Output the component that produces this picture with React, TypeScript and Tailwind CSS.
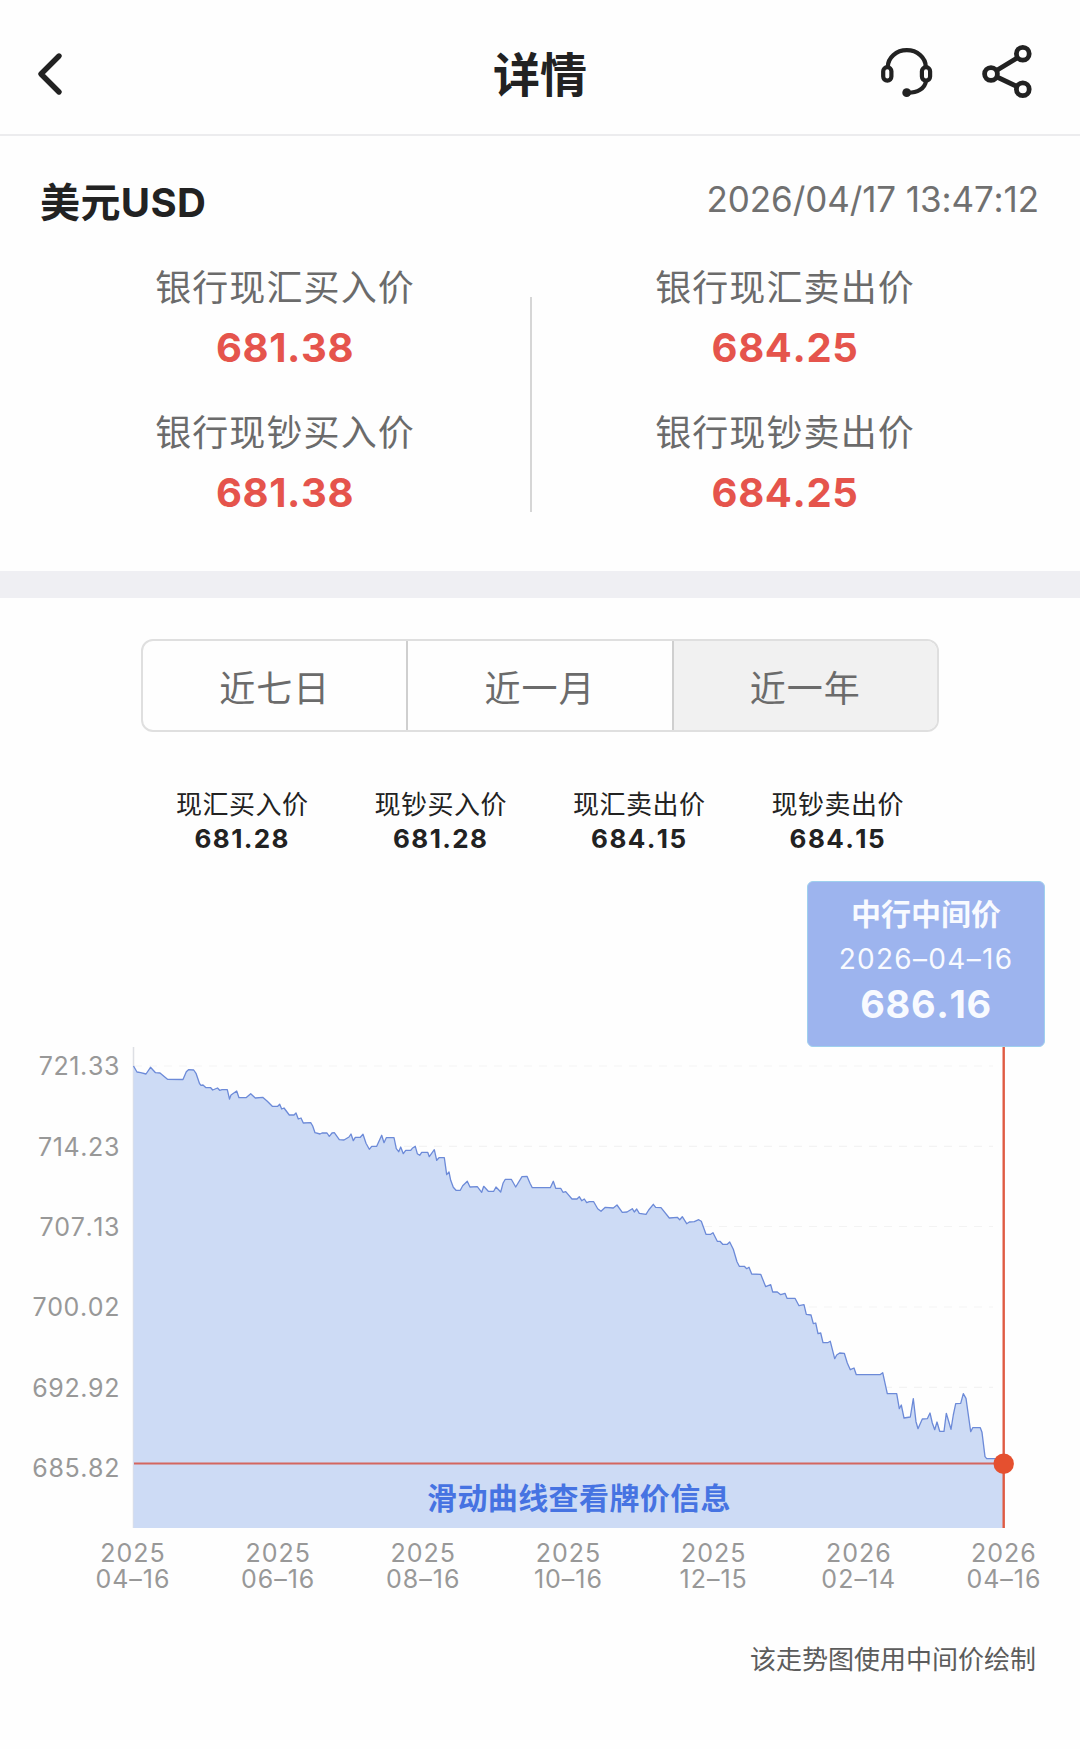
import { useState } from "react";
import clsx from "clsx";

const rates = [
  [
    ["银行现汇买入价", "681.38"],
    ["银行现钞买入价", "681.38"]
  ],
  [
    ["银行现汇卖出价", "684.25"],
    ["银行现钞卖出价", "684.25"]
  ]
] as const;

const tabs = ["近七日", "近一月", "近一年"] as const;

const stats = [
  ["现汇买入价", "681.28"],
  ["现钞买入价", "681.28"],
  ["现汇卖出价", "684.15"],
  ["现钞卖出价", "684.15"]
] as const;

const yLabels = ["721.33", "714.23", "707.13", "700.02", "692.92", "685.82"];

const xLabels = [
  "2025\n04–16",
  "2025\n06–16",
  "2025\n08–16",
  "2025\n10–16",
  "2025\n12–15",
  "2026\n02–14",
  "2026\n04–16"
];

const gridLines = [26, 106.3, 186.5, 267, 347.3];

// x,y pairs of the middle rate over one year
const points =
  "133.5,26 137,32 140.7,32.7 146,34 150.5,27.3 155.5,32.7 160,33 167.5,39.3 183,39.5 186.3,31.7 188.5,29.7 193.7,30 196,33.3 " +
  "199.5,43.5 201,45.3 203,45 206,47.7 210.7,47.7 212.7,50 217.5,48 219.7,50.3 222,49.7 227.3,49.7 229.5,59 231,55 236.7,51 " +
  "239,57.7 246,57.7 250.7,53.7 255.3,58 262.7,57.3 267.3,61.3 272.3,66.3 277.7,66.3 279.7,64.3 281.7,69 284,68 289.3,75 294,75 " +
  "296,73 298.3,79 301,78 303.3,83 310.7,82.7 312.7,86 315,92.7 320,94 322,93 327,93 329.3,96.3 332,93 334.3,92.7 339.3,99.7 " +
  "344,100 349,97 351,94 353.3,100.7 355.3,97.3 360.3,97.3 363,94.3 366,103.3 369.3,109.3 371.7,106.3 376.7,106.3 381.7,95.3 " +
  "384,102.7 386.3,97.7 394,97.7 396.3,108.7 398.7,111.7 400.7,107 403.3,113.7 405.7,110.3 410.7,110.3 412.3,108.3 415.3,106.3 " +
  "417.3,113.7 419.7,115.3 421.7,112.3 427.7,112.3 429.3,116.7 434.3,109.7 436.7,120.3 439,117.7 444.3,117.7 446.7,134.7 449,132 " +
  "450.7,140.3 453.3,147.3 456,150.3 460.3,150.3 462.7,145.7 467.3,141.3 470,147 477.3,146.7 481.7,152.3 483.7,146.3 488.3,151.3 " +
  "493.7,151.3 496,147 500.7,152 503,143.3 505.3,139.3 511.3,139.3 515.7,147 522,136.7 527,136.3 530,143.3 532.3,147.7 550.3,147.7 " +
  "553.3,141.3 555.7,148.3 560.7,148.3 563,152.3 565.7,151.7 572,159 577,159 579.3,156.7 581.7,160.7 584.3,159 586.7,162.7 " +
  "589.3,161.7 593.7,161.7 597.7,168.7 601,171.3 605.3,167.3 613.3,168 617,165 622.3,172.3 627,172 632.3,168.7 634.3,172 636.7,169 " +
  "639.3,173.3 646,174.3 648.7,170 653.3,164.3 655.7,167.3 661,167.7 669.3,178 677.3,177.3 679.7,179.7 682.3,176.7 686.7,183.7 " +
  "689.3,182 694.3,181.7 698.7,179.7 701.3,181.3 706,194.3 710.7,194.3 713,192.7 717.3,201.3 720,201.3 722.7,204.3 727.3,204.3 " +
  "729.7,202 733.3,209.3 737,221.7 739.3,226.3 744.3,226.3 746.7,228.7 749,227.3 751.7,234 760.7,234.3 765.7,246.7 770.7,244.7 " +
  "772.7,252 777.3,252 780.7,254.7 785,253.3 787,258.3 795,258.3 799,265.7 804,264.7 806.3,274.3 811,275 813.3,283.7 815.7,283 " +
  "818,293.7 820.7,293 823,302.7 827.7,302.7 830.3,301.3 834.7,318.7 836.7,315 839.7,313 844.3,313.3 847.3,323 850.3,329.7 854,328 " +
  "856.3,334.7 880,334.7 882.7,332.7 887.3,353.7 896.7,353.7 899.3,368.7 901.3,365 904,378 910.3,377 913.3,358.7 916,381.7 " +
  "918,388.7 922.3,379 927.3,378.7 930,373 932.3,383 934.7,389.7 937,382 939.7,391.3 944,391.3 946.3,373.3 951,389.3 953.3,375 " +
  "955.7,363.7 960.7,363.3 963.3,353.7 966,358.3 970.7,391.7 972.7,387.7 980.3,387.7 982,392.3 985,416.7 986.7,418.7 998,418.7 " +
  "1003.5,423.7";

function Header() {
  return (
    <header className="flex h-[136px] items-center justify-between border-b-2 border-[#ececee] pt-[13px] pr-[44px] pl-[34px]">
      <button className="flex w-[170px]" aria-label="返回">
        <svg width="32" height="48" viewBox="0 0 32 48" fill="none" stroke="#222" strokeWidth="5.4" strokeLinecap="round" strokeLinejoin="round">
          <path d="M25 6 7 24l18 18" />
        </svg>
      </button>
      <h1 className="pt-[2px] text-[47px] leading-none font-bold">详情</h1>
      <div className="flex w-[160px] justify-between pb-[3px]">
        <svg width="60" height="60" viewBox="876 42 60 60" fill="none" stroke="#222" strokeWidth="4.2">
          <path d="M887.8 67a19 16.8 0 0 1 38 0" />
          <rect x="883.2" y="67.2" width="8.2" height="13.4" rx="4.1" />
          <rect x="921.9" y="67.2" width="8.2" height="13.4" rx="4.1" />
          <path d="M926 81c-1 7.500-8.500 12-19 11.700" />
          <circle cx="906.7" cy="92.700" r="4.400" fill="#222" stroke="none" />
        </svg>
        <svg width="60" height="60" viewBox="976 42 60 60" fill="none" stroke="#222" strokeWidth="4.8">
          <circle cx="991" cy="74" r="6.4" />
          <circle cx="1022.800" cy="53.700" r="6.4" />
          <circle cx="1022.800" cy="89.300" r="6.4" />
          <path d="M996.500 70.500l20.500-12.500M997 77l20 9.500" />
        </svg>
      </div>
    </header>
  );
}

function Tooltip() {
  return (
    <div className="mt-[24px] mr-[35px] ml-auto flex h-[166px] w-[238px] flex-col items-center rounded-[6px] border border-[#9fd0ee] bg-[#9db4ee] pt-[11px] text-[#f8faff]">
      <div className="text-[30px] leading-[42px] font-bold">中行中间价</div>
      <div className="text-[28px] leading-[48px] tracking-[1.3px]">2026–04–16</div>
      <div className="text-[38px] leading-[42px] font-bold tracking-[0.6px]">686.16</div>
    </div>
  );
}

function Chart() {
  return (
    <div>
      <div className="flex h-[481px]">
        <div className="-mt-[20px] w-[120px] text-right text-[25px] tracking-[0.6px] text-[#989898]">
          {yLabels.map((label) => (
            <div key={label} className="flex h-[80.3px] items-center justify-end">
              {label}
            </div>
          ))}
        </div>
        <div className="relative ml-[12px]">
          <svg width="900" height="481" viewBox="132 7 900 481" fill="none">
            {gridLines.map((y) => (
              <path key={y} d={`M134 ${y}H993`} stroke="#f3f3f3" strokeWidth="1.2" strokeDasharray="8 7" />
            ))}
            <path d="M133.5 7V488" stroke="#dddfe4" strokeWidth="1.5" />
            <polygon points={`133.5,488 ${points} 1003.5,488`} fill="#cddbf5" />
            <polyline points={points} stroke="#6c8ad8" strokeWidth="1.3" strokeLinejoin="round" />
            <path d="M134 423.5H1003.5" stroke="#d4665f" strokeWidth="2.2" />
            <path d="M1003.7 7V488" stroke="#df5b43" strokeWidth="2.4" />
            <circle cx="1003.7" cy="423.7" r="10.2" fill="#e5502f" />
          </svg>
          <div className="absolute bottom-[9px] left-[295px] text-[30px] leading-[42px] font-bold tracking-[0.4px] whitespace-nowrap text-[#4673e2]">
            滑动曲线查看牌价信息
          </div>
        </div>
      </div>
      <div className="mt-[12px] ml-[88px] flex w-[961px] justify-between text-center text-[25px] leading-[26px] tracking-[1px] text-[#989898]">
        {xLabels.map((label) => (
          <div key={label} className="w-[90px] whitespace-pre-line">
            {label}
          </div>
        ))}
      </div>
    </div>
  );
}

export default function App() {
  const [tab, setTab] = useState(2);

  return (
    <main className="h-[1749px] w-[1080px] overflow-hidden bg-[#fefefe] font-[Inter,'Noto_Sans_CJK_SC',sans-serif] text-[#222] [font-kerning:none]">
      <Header />
      <section className="pt-[42px]">
        <div className="flex h-[48px] items-center justify-between pr-[41px] pl-[40px]">
          <h2 className="pt-[2px] text-[40px] font-bold tracking-[0.4px]">美元USD</h2>
          <span className="pb-[5px] text-[35px] tracking-[-0.1px] text-[#707070]">2026/04/17 13:47:12</span>
        </div>
        <div className="flex h-[345px] pt-[31px]">
          {rates.map((column, i) => (
            <div key={i} className={clsx("flex w-[500px] flex-col gap-[23px]", i === 0 && "ml-[35px]")}>
              {column.map(([label, value]) => (
                <div key={label} className="text-center">
                  <div className="pt-[2px] text-[36px] leading-[58px] tracking-[1.1px] text-[#6b6b6b]">{label}</div>
                  <div className="text-[40px] leading-[62px] font-bold tracking-[0.6px] text-[#e5544c]">{value}</div>
                </div>
              ))}
            </div>
          ))}
          <div className="mt-[40px] -ml-[505px] h-[215px] w-[2px] bg-[#d6d6d6]" />
        </div>
      </section>
      <div className="h-[27px] bg-[#efeff3]" />
      <div className="mx-auto mt-[41px] flex h-[93px] w-[798px] overflow-hidden rounded-[12px] border-2 border-[#dfdfdf]">
        {tabs.map((label, i) => (
          <button
            key={label}
            onClick={() => setTab(i)}
            className={clsx(
              "flex-1 pt-[7px] text-[36px] tracking-[1px] text-[#6b6b6b]",
              i > 0 && "border-l-2 border-[#cfcfcf]",
              tab === i && "bg-[#f1f1f1]"
            )}
          >
            {label}
          </button>
        ))}
      </div>
      <div className="mx-auto mt-[56px] flex w-[794px] text-center">
        {stats.map(([label, value]) => (
          <div key={label} className="flex-1">
            <div className="text-[26px] leading-[34px] tracking-[0.5px]">{label}</div>
            <div className="-mt-px text-[26px] leading-[36px] font-bold tracking-[1.4px]">{value}</div>
          </div>
        ))}
      </div>
      <Tooltip />
      <Chart />
      <p className="mt-[48px] pr-[44px] text-right text-[26px] leading-[40px] text-[#5c5c5c]">该走势图使用中间价绘制</p>
    </main>
  );
}
